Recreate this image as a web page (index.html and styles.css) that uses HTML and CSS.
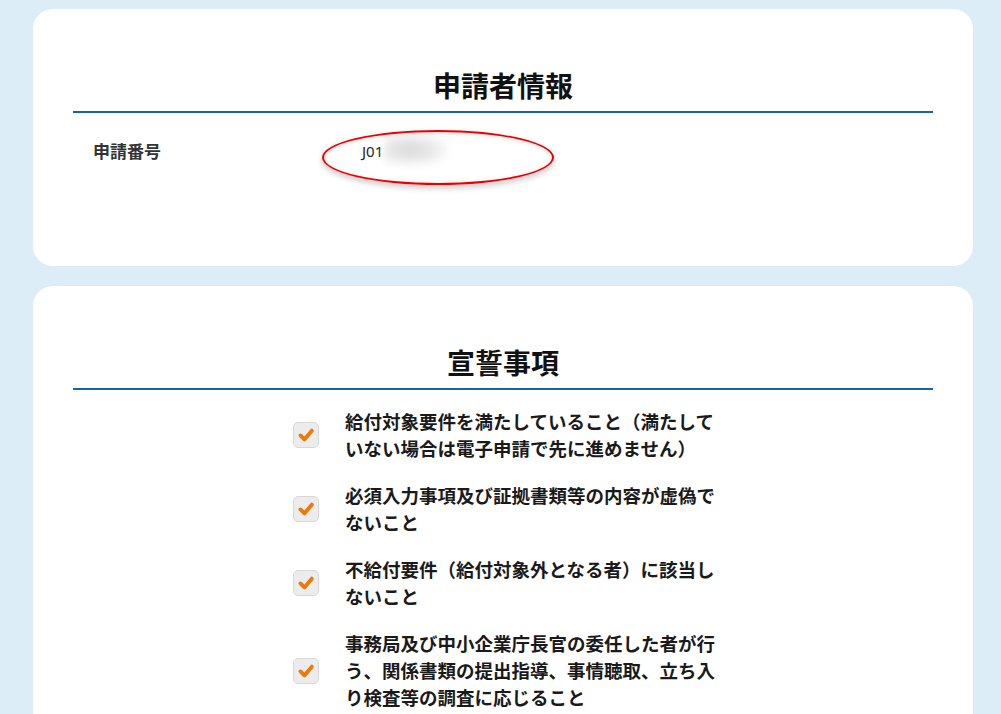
FILE: index.html
```html
<!DOCTYPE html>
<html lang="ja">
<head>
<meta charset="utf-8">
<title>申請者情報</title>
<link rel="stylesheet" href="styles.css">
</head>
<body>
<main class="page">
  <section class="card card-info">
    <h2 class="card-title">申請者情報</h2>
    <div class="info-row">
      <div class="info-label">申請番号</div>
      <div class="info-value">
        <span class="value-text">J01</span><span class="value-blur"></span>
        <span class="highlight"></span>
      </div>
    </div>
  </section>

  <section class="card card-oath">
    <h2 class="card-title">宣誓事項</h2>
    <ul class="oath-list">
      <li class="oath-item">
        <span class="checkbox"><svg viewBox="0 0 26 26" width="26" height="26"><path d="M7 13.5 L11.3 17.8 L19.3 8.3" fill="none" stroke="#ec7a08" stroke-width="4.2" stroke-linecap="round" stroke-linejoin="round"/></svg></span>
        <span class="oath-text">給付対象要件を満たしていること（満たしていない場合は電子申請で先に進めません）</span>
      </li>
      <li class="oath-item">
        <span class="checkbox"><svg viewBox="0 0 26 26" width="26" height="26"><path d="M7 13.5 L11.3 17.8 L19.3 8.3" fill="none" stroke="#ec7a08" stroke-width="4.2" stroke-linecap="round" stroke-linejoin="round"/></svg></span>
        <span class="oath-text">必須入力事項及び証拠書類等の内容が虚偽でないこと</span>
      </li>
      <li class="oath-item">
        <span class="checkbox"><svg viewBox="0 0 26 26" width="26" height="26"><path d="M7 13.5 L11.3 17.8 L19.3 8.3" fill="none" stroke="#ec7a08" stroke-width="4.2" stroke-linecap="round" stroke-linejoin="round"/></svg></span>
        <span class="oath-text">不給付要件（給付対象外となる者）に該当しないこと</span>
      </li>
      <li class="oath-item">
        <span class="checkbox"><svg viewBox="0 0 26 26" width="26" height="26"><path d="M7 13.5 L11.3 17.8 L19.3 8.3" fill="none" stroke="#ec7a08" stroke-width="4.2" stroke-linecap="round" stroke-linejoin="round"/></svg></span>
        <span class="oath-text">事務局及び中小企業庁長官の委任した者が行う、関係書類の提出指導、事情聴取、立ち入り検査等の調査に応じること</span>
      </li>
    </ul>
  </section>
</main>
</body>
</html>
```
FILE: styles.css
```css
html, body {
  margin: 0;
  padding: 0;
}
body {
  background: #dcedf7;
  font-family: "Noto Sans CJK JP", "Noto Sans", sans-serif;
  color: #222;
  height: 714px;
  overflow: hidden;
}
.page {
  padding: 9px 0 0 33px;
  display: flex;
  flex-direction: column;
  gap: 20px;
}
.card {
  width: 860px;
  background: #fff;
  border-radius: 20px;
  padding: 56px 40px 0;
}
.card-info {
  height: 201px;
}
.card-oath {
  height: 600px;
}
.card-title {
  margin: 0;
  text-align: center;
  font-size: 28px;
  line-height: 40px;
  font-weight: 700;
  color: #111;
  padding-bottom: 6px;
  border-bottom: 2px solid #1a64a2;
}
.info-row {
  display: flex;
  align-items: center;
  margin-top: 23px;
  padding-left: 20px;
}
.info-label {
  width: 269px;
  font-size: 17px;
  line-height: 24px;
  font-weight: 700;
  color: #333;
}
.info-value {
  position: relative;
  display: flex;
  align-items: center;
  font-family: "Noto Sans", "DejaVu Sans", sans-serif;
  font-size: 15px;
  line-height: 24px;
  color: #222;
}
.value-blur {
  display: inline-block;
  width: 64px;
  height: 30px;
  margin-left: 1px;
  background: radial-gradient(ellipse at 40% 45%, #dadada 0%, #e8e8e8 40%, rgba(255,255,255,0) 82%);
  filter: blur(3px);
}
.highlight {
  position: absolute;
  left: -40px;
  top: -6px;
  width: 228px;
  height: 51px;
  border: 2px solid #e80000;
  border-radius: 50%;
  box-shadow: 0 3px 6px rgba(0,0,0,0.22), inset 0 1px 5px rgba(0,0,0,0.15);
}
.oath-list {
  list-style: none;
  margin: 18px 0 0 220px;
  padding: 0;
  display: flex;
  flex-direction: column;
  gap: 20px;
}
.oath-item {
  display: flex;
  align-items: center;
  gap: 26px;
}
.checkbox {
  flex: none;
  width: 24px;
  height: 24px;
  border: 1px solid #d8d8d8;
  border-radius: 5px;
  background: #ececec;
  display: flex;
  align-items: center;
  justify-content: center;
}
.checkbox svg {
  display: block;
  width: 24px;
  height: 24px;
}
.oath-text {
  width: 375px;
  font-size: 18.5px;
  line-height: 27px;
  font-weight: 700;
  color: #1a1a1a;
}
```
